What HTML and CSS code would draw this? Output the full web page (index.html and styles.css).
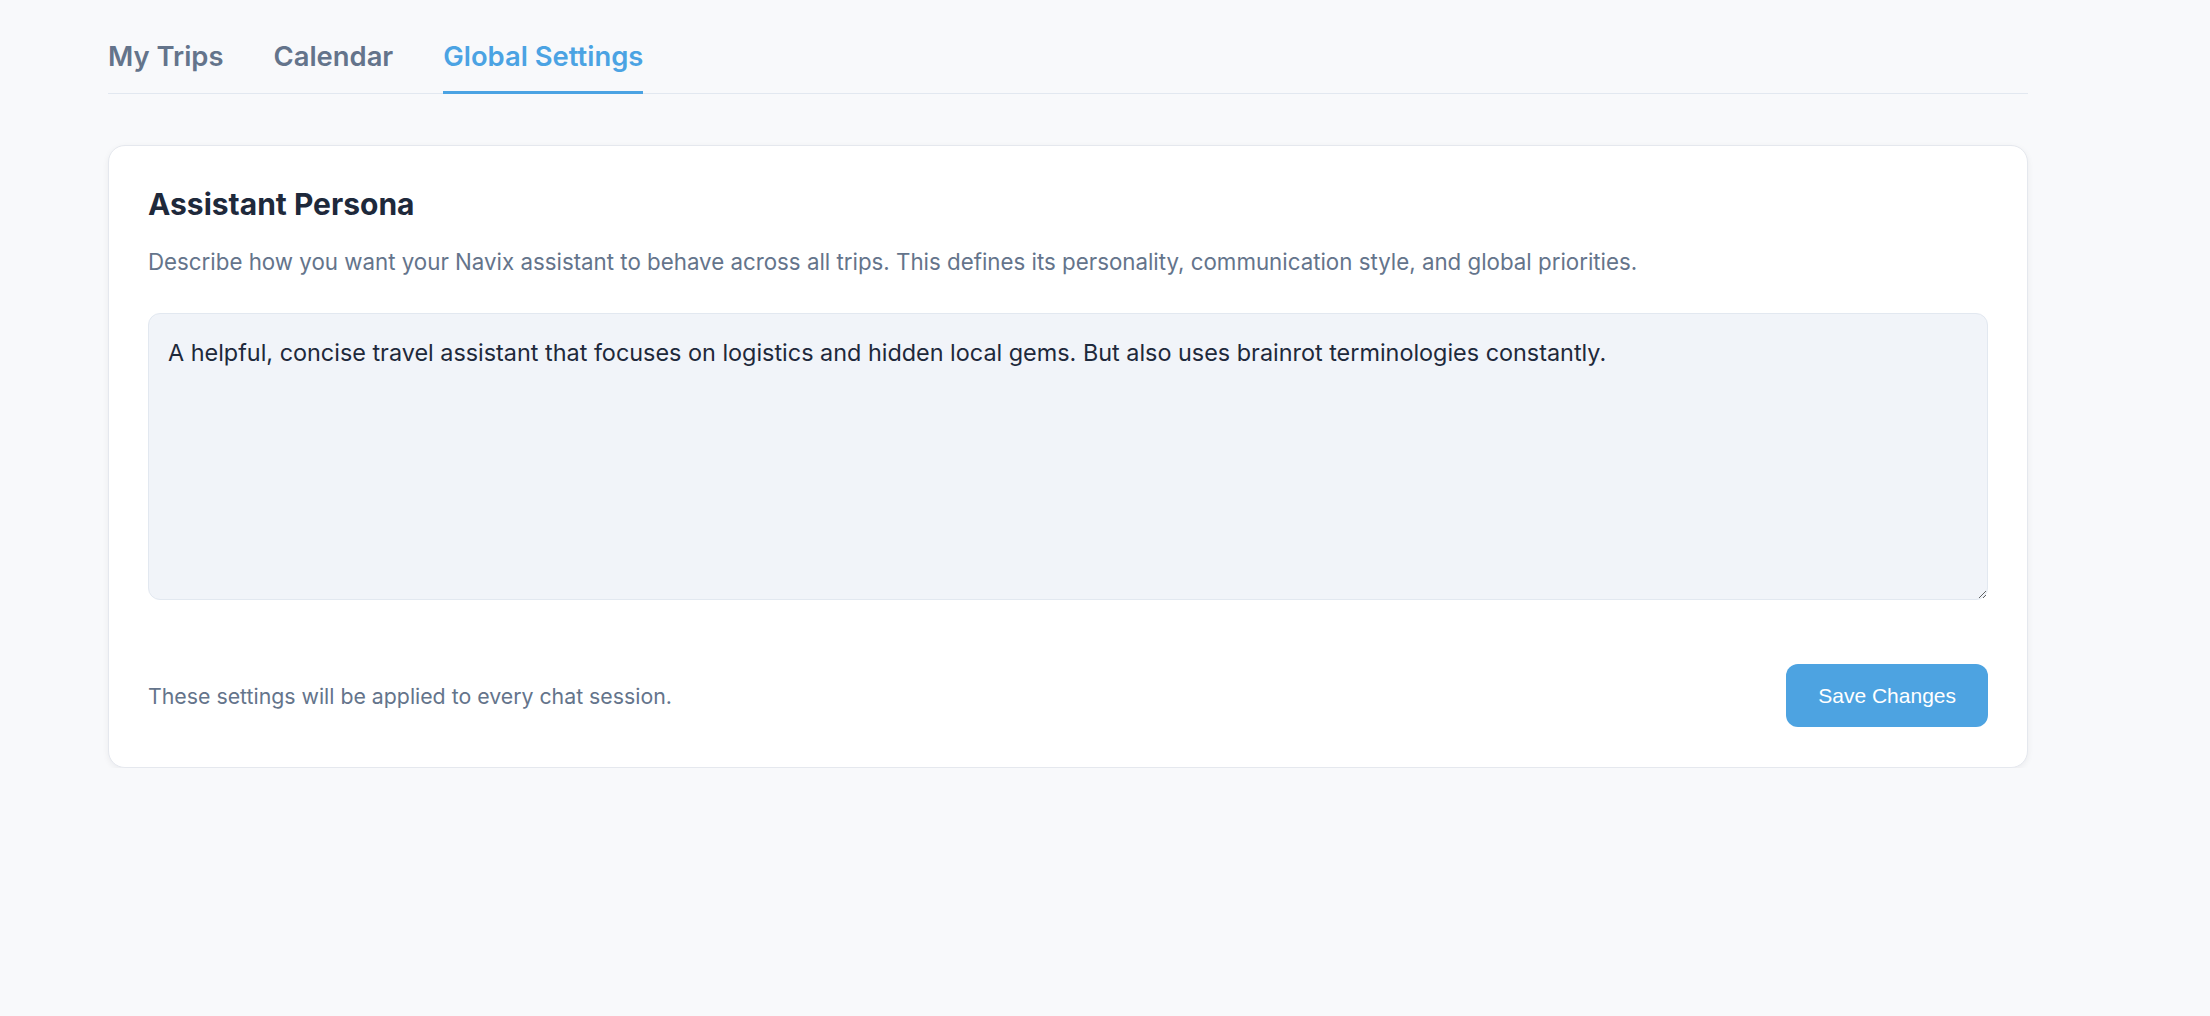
FILE: index.html
```html
<!DOCTYPE html>
<html lang="en">
<head>
<meta charset="utf-8">
<title>Global Settings</title>
<link rel="stylesheet" href="styles.css">
</head>
<body>
<div class="page">
  <div class="container">
    <nav class="tabs">
      <a class="tab">My Trips</a>
      <a class="tab">Calendar</a>
      <a class="tab active">Global Settings</a>
    </nav>
    <section class="card">
      <h2 class="card-title">Assistant Persona</h2>
      <p class="card-desc">Describe how you want your Navix assistant to behave across all trips. This defines its personality, communication style, and global priorities.</p>
      <textarea class="persona">A helpful, concise travel assistant that focuses on logistics and hidden local gems. But also uses brainrot terminologies constantly.</textarea>
      <div class="card-footer">
        <span class="footer-note">These settings will be applied to every chat session.</span>
        <button class="save-btn">Save Changes</button>
      </div>
    </section>
  </div>
</div>
</body>
</html>
```

FILE: styles.css
```css
* { box-sizing: border-box; }
html, body { margin: 0; padding: 0; }
body {
  background: #f8f9fb;
  font-family: Inter, "Noto Sans", sans-serif;
  color: #1e293b;
}
.page {
  padding: 0 108px;
}
.container {
  max-width: 1920px;
}
.tabs {
  display: flex;
  gap: 50px;
  padding-top: 38px;
  border-bottom: 1px solid #e2e8f0;
}
.tab {
  font-size: 27.4px;
  line-height: 36px;
  font-weight: 600;
  color: #64748b;
  padding-bottom: 17px;
  border-bottom: 3px solid transparent;
  margin-bottom: -1px;
  cursor: pointer;
}
.tab.active {
  color: #4ba3e3;
  border-bottom-color: #4ba3e3;
}
.card {
  margin-top: 51px;
  background: #ffffff;
  border: 1px solid #e5e8ee;
  border-radius: 17px;
  padding: 40px 39px 40px 39px;
  box-shadow: 0 2px 6px rgba(15, 23, 42, 0.06);
}
.card-title {
  margin: 0;
  font-size: 30px;
  line-height: 36px;
  font-weight: 700;
  color: #1e293b;
}
.card-desc {
  margin: 24px 0 0 0;
  font-size: 22.3px;
  line-height: 32px;
  color: #64748b;
}
.persona {
  display: block;
  width: 100%;
  height: 287px;
  margin-top: 35px;
  padding: 22px 19px;
  background: #f1f4f9;
  border: 1px solid #e2e8f0;
  border-radius: 12px;
  font-family: Inter, "Noto Sans", sans-serif;
  font-size: 23.4px;
  line-height: 33px;
  color: #1e293b;
  resize: vertical;
  outline: none;
}
.card-footer {
  display: flex;
  align-items: center;
  justify-content: space-between;
  margin-top: 64px;
}
.footer-note {
  font-size: 21.3px;
  line-height: 32px;
  color: #64748b;
}
.save-btn {
  height: 63px;
  padding: 0 32px;
  border: none;
  border-radius: 12px;
  background: #4da3e1;
  color: #ffffff;
  font-family: "Liberation Sans", Arial, sans-serif;
  font-size: 21px;
  cursor: pointer;
}
```
